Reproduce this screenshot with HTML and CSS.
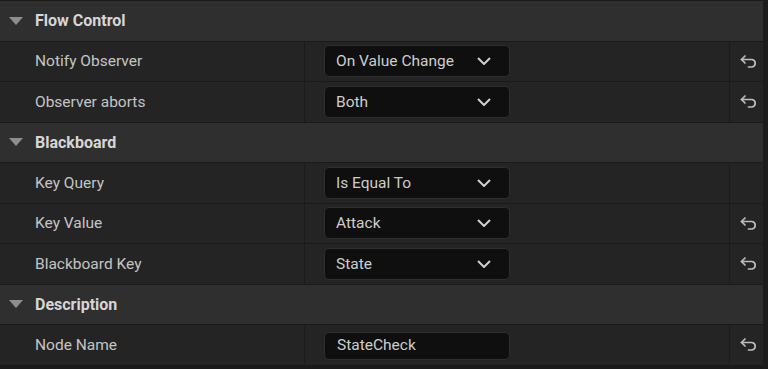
FILE: index.html
```html
<!DOCTYPE html>
<html>
<head>
<meta charset="utf-8">
<link rel="stylesheet" href="styles.css">
</head>
<body>
<div class="panel">
  <div class="list">
    <div class="cat"><span class="tri"></span><span class="cat-title">Flow Control</span></div>
    <div class="row">
      <div class="name">Notify Observer</div>
      <div class="val"><div class="combo"><span>On Value Change</span><svg class="chev" viewBox="0 0 14 8"><polyline points="1,1 7,7 13,1"/></svg></div></div>
      <div class="reset"><svg class="undo" viewBox="0 0 18 13"><polyline points="5,1 1.5,4.5 5,8"/><path d="M1.5 4.5 H12 A3.8 3.8 0 0 1 12 12 H8.5"/></svg></div>
    </div>
    <div class="row">
      <div class="name">Observer aborts</div>
      <div class="val"><div class="combo"><span>Both</span><svg class="chev" viewBox="0 0 14 8"><polyline points="1,1 7,7 13,1"/></svg></div></div>
      <div class="reset"><svg class="undo" viewBox="0 0 18 13"><polyline points="5,1 1.5,4.5 5,8"/><path d="M1.5 4.5 H12 A3.8 3.8 0 0 1 12 12 H8.5"/></svg></div>
    </div>
    <div class="cat"><span class="tri"></span><span class="cat-title">Blackboard</span></div>
    <div class="row">
      <div class="name">Key Query</div>
      <div class="val"><div class="combo"><span>Is Equal To</span><svg class="chev" viewBox="0 0 14 8"><polyline points="1,1 7,7 13,1"/></svg></div></div>
      <div class="reset"></div>
    </div>
    <div class="row">
      <div class="name">Key Value</div>
      <div class="val"><div class="combo"><span>Attack</span><svg class="chev" viewBox="0 0 14 8"><polyline points="1,1 7,7 13,1"/></svg></div></div>
      <div class="reset"><svg class="undo" viewBox="0 0 18 13"><polyline points="5,1 1.5,4.5 5,8"/><path d="M1.5 4.5 H12 A3.8 3.8 0 0 1 12 12 H8.5"/></svg></div>
    </div>
    <div class="row">
      <div class="name">Blackboard Key</div>
      <div class="val"><div class="combo"><span>State</span><svg class="chev" viewBox="0 0 14 8"><polyline points="1,1 7,7 13,1"/></svg></div></div>
      <div class="reset"><svg class="undo" viewBox="0 0 18 13"><polyline points="5,1 1.5,4.5 5,8"/><path d="M1.5 4.5 H12 A3.8 3.8 0 0 1 12 12 H8.5"/></svg></div>
    </div>
    <div class="cat"><span class="tri"></span><span class="cat-title">Description</span></div>
    <div class="row">
      <div class="name">Node Name</div>
      <div class="val"><div class="textbox">StateCheck</div></div>
      <div class="reset"><svg class="undo" viewBox="0 0 18 13"><polyline points="5,1 1.5,4.5 5,8"/><path d="M1.5 4.5 H12 A3.8 3.8 0 0 1 12 12 H8.5"/></svg></div>
    </div>
  </div>
  <div class="scroll"></div>
</div>
</body>
</html>
```
FILE: styles.css
```css
html, body {
  margin: 0;
  padding: 0;
  background: #1a1a1a;
  width: 768px;
  height: 369px;
  overflow: hidden;
}
.panel {
  display: flex;
  width: 768px;
  height: 369px;
  font-family: Roboto, "Liberation Sans", sans-serif;
  font-size: 15.5px;
}
.list {
  width: 763px;
  display: flex;
  flex-direction: column;
  gap: 1px;
  padding-top: 1px;
  background: #1a1a1a;
}
.scroll {
  flex: 1;
  background: #1c1c1c;
}
.cat {
  height: 39.5px;
  flex: none;
  background: #2f2f2f;
  display: flex;
  align-items: center;
  color: #d6d6d6;
  font-weight: 700;
  font-size: 16px;
}
.tri {
  width: 0;
  height: 0;
  margin-left: 9px;
  margin-right: 12px;
  border-left: 7px solid transparent;
  border-right: 7px solid transparent;
  border-top: 8px solid #8e8e8e;
}
.row {
  height: 39.5px;
  flex: none;
  display: grid;
  grid-template-columns: 304px 424px 1fr;
  gap: 1px;
  background: #1b1b1b;
}
.name {
  background: #242424;
  display: flex;
  align-items: center;
  padding-left: 35px;
  color: #c4c4c4;
}
.val {
  background: #242424;
  display: flex;
  align-items: center;
  padding-left: 19px;
}
.reset {
  background: #242424;
  display: flex;
  align-items: center;
  justify-content: center;
}
.combo {
  width: 186px;
  height: 32px;
  box-sizing: border-box;
  background: #0f0f0f;
  border: 1px solid #2e2e2e;
  border-radius: 5px;
  display: flex;
  align-items: center;
  justify-content: space-between;
  padding: 0 18px 0 11px;
  color: #cdcdcd;
}
.chev {
  width: 14px;
  height: 8px;
  fill: none;
  stroke: #d0d0d0;
  stroke-width: 2;
}
.textbox {
  width: 186px;
  height: 28px;
  box-sizing: border-box;
  background: #0f0f0f;
  border: 1px solid #2e2e2e;
  border-radius: 5px;
  color: #cdcdcd;
  padding: 3px 0 0 12px;
  margin-top: 2px;
}
.undo {
  width: 18px;
  height: 13px;
  fill: none;
  stroke: #bdbdbd;
  stroke-width: 1.7;
  stroke-linecap: round;
  stroke-linejoin: round;
  margin-left: 4px;
}
```
